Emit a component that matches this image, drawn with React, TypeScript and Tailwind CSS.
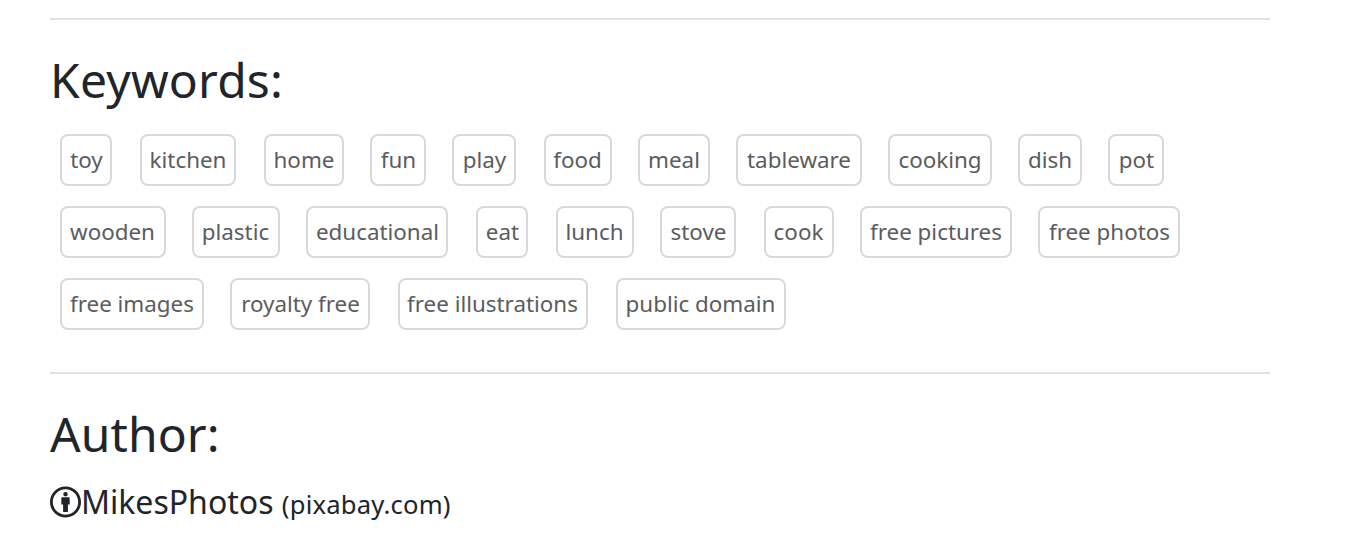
const keywords = [
  [
    { label: "toy", size: "w-[52px] mr-7 pl-px" },
    { label: "kitchen", size: "w-24 mr-7" },
    { label: "home", size: "w-20 mr-[26px]" },
    { label: "fun", size: "w-14 mr-[26px] pl-px" },
    { label: "play", size: "w-16 mr-7 pl-px" },
    { label: "food", size: "w-[68px] mr-[26px] pr-px" },
    { label: "meal", size: "w-[72px] mr-[26px]" },
    { label: "tableware", size: "w-[126px] mr-[26px]" },
    { label: "cooking", size: "w-[104px] mr-[26px]" },
    { label: "dish", size: "w-16 mr-[26px]" },
    { label: "pot", size: "w-14 pl-px" },
  ],
  [
    { label: "wooden", size: "w-[106px] mr-[26px] pr-px" },
    { label: "plastic", size: "w-[88px] mr-[26px] pr-px" },
    { label: "educational", size: "w-[142px] mr-7 pl-px" },
    { label: "eat", size: "w-[52px] mr-7 pl-px" },
    { label: "lunch", size: "w-[78px] mr-[26px] pr-px" },
    { label: "stove", size: "w-[76px] mr-7 pl-px" },
    { label: "cook", size: "w-[70px] mr-[26px] pr-px" },
    { label: "free pictures", size: "w-[152px] mr-[26px]" },
    { label: "free photos", size: "w-[142px] pl-px" },
  ],
  [
    { label: "free images", size: "w-36 mr-[26px]" },
    { label: "royalty free", size: "w-[140px] mr-7 pl-px" },
    { label: "free illustrations", size: "w-[190px] mr-7 pr-px" },
    { label: "public domain", size: "w-[170px] pr-px" },
  ],
];

function Keyword({ label, size }: { label: string; size: string }) {
  return (
    <a
      className={`flex h-[52px] shrink-0 items-center justify-center rounded-lg border-2 border-[#d9d9d9] text-[22.4px] leading-[48px] whitespace-nowrap text-[#5b5c5e] ${size}`}
    >
      {label}
    </a>
  );
}

export default function App() {
  return (
    <main className="h-[540px] w-[1368px] overflow-hidden bg-white pl-[50px] font-['Noto_Sans',sans-serif] text-[#212529] antialiased">
      <section className="w-[1220px] pt-[18px]">
        <hr className="border-t-2 border-[#e3e3e4]" />
        <h2 className="mt-[31px] text-[48px] leading-[58px] tracking-[0.2px]">Keywords:</h2>
        <div className="mt-[25px] flex flex-col gap-5 pl-2.5">
          {keywords.map((row) => (
            <div key={row[0].label} className="flex">
              {row.map((keyword) => (
                <Keyword key={keyword.label} {...keyword} />
              ))}
            </div>
          ))}
        </div>
      </section>
      <section className="w-[1220px] pt-[42px]">
        <hr className="border-t-2 border-[#e3e3e4]" />
        <h2 className="mt-[31px] text-[48px] leading-[58px] tracking-[0.1px]">Author:</h2>
        <p className="mt-4 flex h-12 items-center text-[32px]">
          <svg className="-mt-0.5 h-8 w-[31px]" viewBox="0 0 496 512" fill="currentColor">
            <path d="M314.9 194.4v101.4h-28.3v120.5h-77.1V295.9h-28.3V194.4c0-4.4 1.6-8.2 4.6-11.3 3.1-3.1 6.9-4.7 11.3-4.7H299c4.1 0 7.8 1.6 11.1 4.7 3.1 3.2 4.8 6.9 4.8 11.3zm-101.5-63.7c0-23.3 11.5-35 34.5-35s34.5 11.7 34.5 35c0 23-11.5 34.5-34.5 34.5s-34.5-11.5-34.5-34.5zM247.6 8C389.4 8 496 118.1 496 256c0 147.1-118.5 248-248.4 248C113.6 504 0 394.5 0 256 0 123.1 104.7 8 247.6 8zm.8 44.7C130.2 52.7 44.7 150.6 44.7 256c0 109.8 91.2 202.8 203.7 202.8 103.2 0 202.8-81.1 202.8-202.8.1-113.8-90.2-203.3-202.8-203.3z" />
          </svg>
          <span className="-mt-0.5">
            MikesPhotos <small className="text-[25.6px] tracking-[0.2px]">(pixabay.com)</small>
          </span>
        </p>
      </section>
    </main>
  );
}
